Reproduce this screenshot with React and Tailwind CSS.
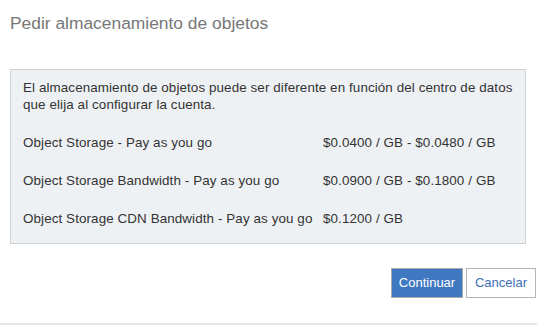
export default function App() {
  return (
    <div className="w-[537px] h-[325px] bg-white relative overflow-hidden" style={{ fontFamily: '"Liberation Sans", Arial, sans-serif' }}>
      <div className="pl-[10px] pt-[13px] text-[17.4px] leading-[20px] text-[#777]">Pedir almacenamiento de objetos</div>
      <div className="ml-[10px] mt-[36px] w-[516px] h-[175px] bg-[#eef1f4] border border-[#cfd2d5] pt-[9px] px-[12px] text-[13.4px] leading-[17px] text-[#333] tracking-[0.1px]">
        <p>El almacenamiento de objetos puede ser diferente en función del centro de datos que elija al configurar la cuenta.</p>
        <div className="grid grid-cols-[300px_1fr] gap-y-[21px] mt-[21px]">
          <div className="whitespace-nowrap">Object Storage - Pay as you go</div>
          <div>$0.0400 / GB - $0.0480 / GB</div>
          <div className="whitespace-nowrap">Object Storage Bandwidth - Pay as you go</div>
          <div>$0.0900 / GB - $0.1800 / GB</div>
          <div className="whitespace-nowrap">Object Storage CDN Bandwidth - Pay as you go</div>
          <div>$0.1200 / GB</div>
        </div>
      </div>
      <div className="flex justify-end gap-[3px] mt-[24px] pr-[1px]">
        <button className="w-[72px] h-[30px] bg-[#3f78c0] border border-[#a9a9a9] text-white text-[13px]">Continuar</button>
        <button className="w-[70px] h-[30px] bg-white border border-[#b5b5b5] text-[#3d6fb5] text-[13px]">Cancelar</button>
      </div>
      <div className="absolute left-0 right-0 top-[323px] h-[2px] bg-[#e8e8e8]"></div>
    </div>
  );
}
